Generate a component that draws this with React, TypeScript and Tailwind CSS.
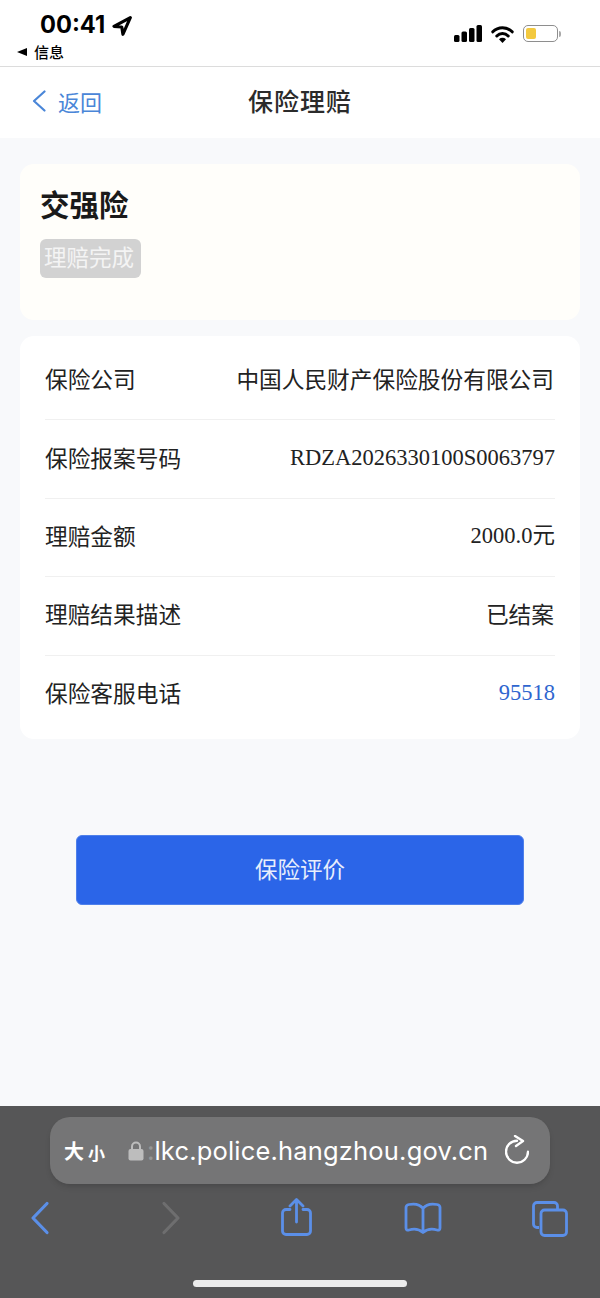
const cjk = "font-['Noto_Sans_CJK_SC','Noto_Sans',sans-serif]";

const rows = [
  { label: "保险公司", value: "中国人民财产保险股份有限公司" },
  { label: "保险报案号码", value: "RDZA2026330100S0063797", serif: true },
  { label: "理赔金额", value: "2000.0元", serif: true },
  { label: "理赔结果描述", value: "已结案" },
  { label: "保险客服电话", value: "95518", serif: true, link: true },
];

const StatusBar = () => (
  <div className="h-[66px] bg-white border-b border-[#dcdcdc] flex items-start justify-between box-content">
    <div className="flex flex-col pl-[17px]">
      <div className="flex items-start gap-[7px] pl-[23px] pt-[11px] h-[38px]">
        <span className="font-['Inter',sans-serif] font-bold text-[23.7px] leading-[28px] text-black">00:41</span>
        <svg className="mt-[5px]" width="20" height="20" viewBox="0 0 18 18">
          <path d="M16.5 1.5 1.800 9.300l7 .6 1 6.600z" fill="none" stroke="black" strokeWidth="2.800" strokeLinejoin="round" />
        </svg>
      </div>
      <div className="flex items-center gap-[7px] h-[20px] mt-[4px]">
        <span className="w-0 h-0 border-y-[4px] border-y-transparent border-r-[10px] border-r-black" />
        <span className={`${cjk} text-[15px] font-medium leading-[20px] text-black`}>信息</span>
      </div>
    </div>
    <div className="flex items-start gap-[9px] pr-[39px] pt-[25px]">
      <svg width="28" height="17" viewBox="0 0 28 17">
        <rect x="0" y="10" width="5.5" height="7" rx="1.5" fill="black" />
        <rect x="7.5" y="6.5" width="5.5" height="10.5" rx="1.5" fill="black" />
        <rect x="15" y="3" width="5.5" height="14" rx="1.5" fill="black" />
        <rect x="22.5" y="0" width="5.5" height="17" rx="1.5" fill="black" />
      </svg>
      <svg width="23" height="18" viewBox="0 0 23 18">
        <path d="M1.800 6.800a13.500 13.500 0 0 1 19.400 0" fill="none" stroke="black" strokeWidth="3" strokeLinecap="round" />
        <path d="M5.800 11a8 8 0 0 1 11.400 0" fill="none" stroke="black" strokeWidth="3" strokeLinecap="round" />
        <path d="M8 14.200a5 5 0 0 1 7 0L11.500 18z" fill="black" />
      </svg>
      <div className="flex items-center gap-[1px]">
        <div className="w-[35px] h-[17px] rounded-[5px] border border-[#8e8e8e] p-[2px] flex">
          <div className="w-[10px] rounded-[2px] bg-[#f3c93f]" />
        </div>
        <div className="w-[2px] h-[6px] rounded-r-full bg-[#a8a8a8]" />
      </div>
    </div>
  </div>
);

const NavBar = () => (
  <div className="h-[71px] bg-white grid grid-cols-[1fr_auto_1fr] items-center">
    <div className="flex items-center gap-[12px] pl-[32px] pb-[4px] text-[#4a86d8]">
      <svg width="14" height="22" viewBox="0 0 14 22">
        <path d="M12.5 1.5 2 11l10.500 9.500" fill="none" stroke="currentColor" strokeWidth="2.200" strokeLinecap="round" strokeLinejoin="round" />
      </svg>
      <span className={`${cjk} text-[22px] leading-[30px]`}>返回</span>
    </div>
    <span className={`${cjk} text-[25px] font-medium leading-[34px] pb-[6px] text-[#2b2b2b] tracking-[1px]`}>保险理赔</span>
    <div />
  </div>
);

const BrowserBar = () => (
  <div className="h-[192px] bg-[#565657] flex flex-col items-center">
    <div className="mt-[11px] w-[500px] h-[67px] rounded-[20px] bg-[#757576] shadow-md flex items-center pl-[14px] pr-[21px] text-white">
      <span className={`${cjk} font-bold text-[20px] leading-none`}>大</span>
      <span className={`${cjk} font-bold text-[17px] leading-none ml-[4px] mt-[3px]`}>小</span>
      <svg className="ml-[23px]" width="16" height="20" viewBox="0 0 16 20">
        <path d="M4 9V5.500a4 4 0 0 1 8 0V9" fill="none" stroke="#bdbdbd" strokeWidth="2" />
        <rect x="0.5" y="8" width="15" height="11.5" rx="2" fill="#bdbdbd" />
      </svg>
      <span className="ml-[3px] font-['Inter',sans-serif] text-[26px] leading-none text-[#959595]">:</span>
      <span className="font-['Inter',sans-serif] text-[25.5px] leading-none tracking-[0.18px] whitespace-nowrap">lkc.police.hangzhou.gov.cn</span>
      <svg className="ml-auto -mt-[2px]" width="24" height="29" viewBox="0 0 24 29">
        <path d="M12 5.700A11 11 0 1 0 23 16.700" fill="none" stroke="white" strokeWidth="2.400" strokeLinecap="round" />
        <path d="M10 1 18 6 11 11" fill="none" stroke="white" strokeWidth="2.400" strokeLinecap="round" strokeLinejoin="round" />
      </svg>
    </div>
    <div className="w-full flex items-center h-[54px] mt-[7px] pl-[30px] text-[#5b8fe8]">
      <svg width="20" height="34" viewBox="0 0 20 34">
        <path d="M17 2.500 3 17l14 14.500" fill="none" stroke="currentColor" strokeWidth="3.200" strokeLinecap="round" strokeLinejoin="round" />
      </svg>
      <svg className="ml-[111px]" width="20" height="34" viewBox="0 0 20 34">
        <path d="M3 2.500 17 17 3 31.500" fill="none" stroke="#6e6e6f" strokeWidth="3.200" strokeLinecap="round" strokeLinejoin="round" />
      </svg>
      <svg className="ml-[100px] -mt-[2px]" width="31" height="38" viewBox="0 0 31 38">
        <path d="M9 11.500H5A3.500 3.500 0 0 0 1.500 15v18A3.500 3.500 0 0 0 5 36.500h21a3.500 3.500 0 0 0 3.500-3.500V15A3.500 3.500 0 0 0 26 11.500h-4" fill="none" stroke="currentColor" strokeWidth="2.800" strokeLinecap="round" />
        <path d="M15.500 24V2M9 8l6.500-6.500L22 8" fill="none" stroke="currentColor" strokeWidth="2.800" strokeLinecap="round" strokeLinejoin="round" />
      </svg>
      <svg className="ml-[92px]" width="38" height="32" viewBox="0 0 38 32">
        <path d="M19 6.500C16 2.500 10 1.500 5 2.500 3.500 2.800 2 4 2 5.500V26c0 2 1.500 2.500 3 2C10 26.500 15 27 19 30.500 23 27 28 26.500 33 28c1.500.5 3 0 3-2V5.500C36 4 34.500 2.800 33 2.500 28 1.500 22 2.500 19 6.500ZM19 6.500V30" fill="none" stroke="currentColor" strokeWidth="2.800" strokeLinejoin="round" />
      </svg>
      <svg className="ml-[90px] mt-[2px]" width="36" height="36" viewBox="0 0 36 36">
        <path d="M7 26.500H5A3.500 3.500 0 0 1 1.500 23V5A3.500 3.500 0 0 1 5 1.500h17A3.500 3.500 0 0 1 25.500 5v3" fill="none" stroke="currentColor" strokeWidth="2.800" />
        <rect x="9" y="9" width="25.5" height="25.5" rx="3.5" fill="none" stroke="currentColor" strokeWidth="2.800" />
      </svg>
    </div>
    <div className="mt-[35px] w-[214px] h-[7px] rounded-full bg-[#ececec]" />
  </div>
);

export default function App() {
  return (
    <div className={`w-[600px] h-[1298px] flex flex-col bg-[#f8f9fb] ${cjk}`}>
      <StatusBar />
      <NavBar />
      <main className="flex-1 px-[20px] pt-[26px]">
        <section className="h-[156px] rounded-[14px] bg-[#fffefa] pl-[20px] pt-[19px]">
          <h1 className="text-[29.5px] font-semibold leading-[40px] text-[#1a1a1a]">交强险</h1>
          <span className="block mt-[16px] h-[39px] w-[101px] rounded-[6px] bg-[#d2d2d2] pl-[4px] text-[22.5px] leading-[35px] text-[#f4f4f4]">理赔完成</span>
        </section>
        <section className="mt-[16px] h-[403px] rounded-[14px] bg-white px-[25px] pt-[6px]">
          {rows.map((row, idx) => (
            <div key={row.label} className={`h-[78.4px] pb-[3px] flex items-center justify-between ${idx < rows.length - 1 ? "border-b border-[#f0f0f0]" : ""}`}>
              <span className="text-[22.7px] leading-[30px] text-[#222222]">{row.label}</span>
              <span className={`leading-[30px] ${row.serif ? "text-[22.5px] font-['Liberation_Serif','Noto_Sans_CJK_SC',serif]" : "text-[22.7px] pr-[1px]"} ${row.link ? "text-[#2f66cf]" : "text-[#222222]"}`}>{row.value}</span>
            </div>
          ))}
        </section>
        <div className="mt-[96px] flex justify-center">
          <button className="w-[448px] h-[70px] rounded-[6px] pb-[2px] bg-[#2b65e8] border border-[#4f80ea] text-[22.5px] text-[#e8eefc]">保险评价</button>
        </div>
      </main>
      <BrowserBar />
    </div>
  );
}
